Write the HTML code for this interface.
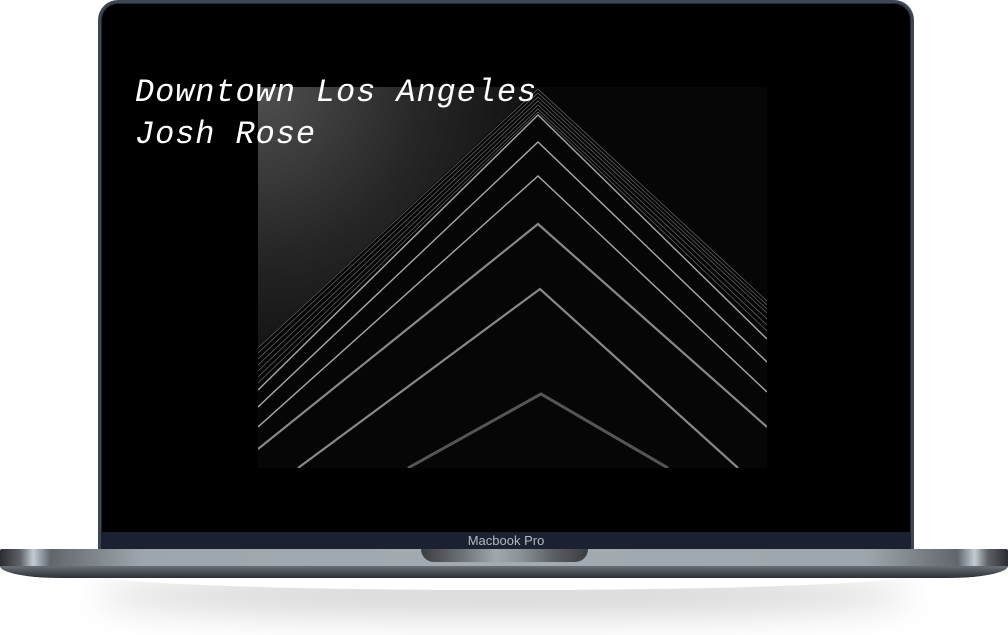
<!DOCTYPE html>
<html><head><style>
html,body{margin:0;padding:0;background:#fff;width:1008px;height:635px;overflow:hidden;position:relative}
.lid{position:absolute;left:98px;top:0;width:816px;height:552px;background:#000;border-radius:20px 20px 0 0;box-sizing:border-box;border:3px solid #3e4656;border-bottom:none;box-shadow:inset 0 0 0 1px #222a36}
.chin{position:absolute;left:101px;top:532px;width:810px;height:18px;background:#1b2130;color:#b4bac4;font:13px "Liberation Sans",sans-serif;text-align:center;line-height:17px}
.shadow{position:absolute;left:100px;top:560px;width:808px;height:30px;border-radius:50%;background:transparent;box-shadow:0 20px 35px 5px rgba(0,0,0,.18)}
.base{position:absolute;left:0;top:549px;width:1008px;height:18px;background:linear-gradient(90deg,#2a2c30 0%,#5e6268 2%,#c3cbd3 3.3%,#62666c 5%,#9ea6ad 14%,#a3abb2 50%,#9ea6ad 86%,#62666c 95%,#c3cbd3 96.7%,#5e6268 98%,#2a2c30 100%);border-radius:2px 2px 0 0}
.base2{position:absolute;left:0;top:566px;width:1008px;height:12px;background:linear-gradient(#6b7078,#2c2f35);border-radius:0 0 60px 60px/0 0 12px 12px}
.notch{position:absolute;left:421px;top:549px;width:167px;height:13px;border-radius:0 0 14px 14px;background:linear-gradient(90deg,#3a3c40,#6e7378 25%,#a0a8ae 45%,#8a9196 60%,#5a5e62 80%,#3a3c40)}
.photo{position:absolute;left:258px;top:87px;width:509px;height:381px}
.t{position:absolute;left:135px;color:#fff;font:italic 32px "Liberation Mono",monospace;letter-spacing:0.9px}
</style></head><body>
<div class="shadow"></div>
<div class="lid"></div>
<svg class="photo" viewBox="0 0 509 381">
<defs>
<radialGradient id="g" gradientUnits="userSpaceOnUse" cx="0" cy="0" r="330"><stop offset="0" stop-color="#505050"/><stop offset="0.5" stop-color="#262626"/><stop offset="1" stop-color="#080808"/></radialGradient>
</defs>
<rect width="509" height="381" fill="#060606"/>
<polygon points="0,0 280,0 0,260" fill="url(#g)"/>
<g stroke="#8a8a8a" fill="none" stroke-width="0.7" opacity="0.75">
<path d="M0,261L280,2L509,214"/><path d="M0,266L280,6L509,218"/><path d="M0,272L280,10L509,222"/><path d="M0,278L280,14L509,226"/><path d="M0,284L280,18L509,232"/><path d="M0,290L280,22L509,238"/><path d="M0,296L280,25L509,244"/>
</g>
<g stroke="#a8a8a8" fill="none" stroke-width="1.4">
<path d="M0,303L280,28L509,252"/>
<path d="M0,320L280,55L509,275"/>
<path d="M0,340L280,89L509,305"/>
</g>
<g stroke="#888" fill="none" stroke-width="2.2">
<path d="M0,362L280,137L509,340"/>
<path d="M40,381L282,202L480,381"/>
</g>
<path d="M150,381L283,307L410,381" stroke="#555" stroke-width="3" fill="none"/>
</svg>
<div class="t" style="top:74px">Downtown Los Angeles</div>
<div class="t" style="top:116px">Josh Rose</div>
<div class="chin">Macbook Pro</div>
<div class="base"></div>
<div class="base2"></div>
<div class="notch"></div>
</body></html>
